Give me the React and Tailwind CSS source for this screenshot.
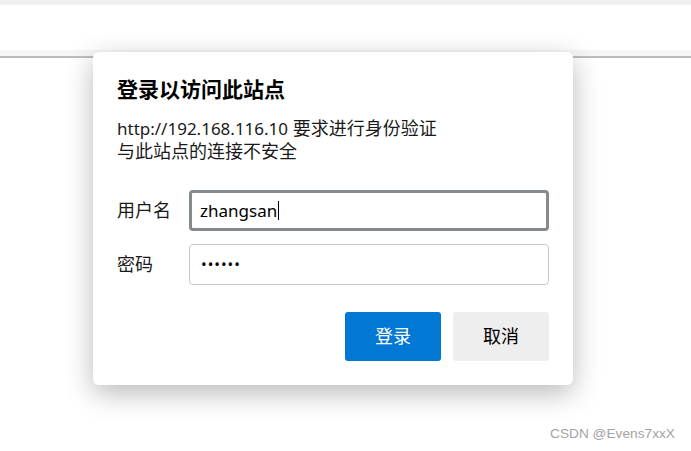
const latin = { fontFamily: '"Noto Sans", sans-serif' };

export default function App() {
  return (
    <div
      className="relative w-[691px] h-[451px] overflow-hidden bg-white"
      style={{ fontFamily: '"Noto Sans", "Noto Sans CJK SC", sans-serif' }}
    >
      {/* browser chrome */}
      <div className="h-[5px] bg-[#f0f0f0]" />
      <div className="h-[45px] bg-white" />
      <div className="h-[6px] bg-[#f7f7f7]" />
      <div className="h-[2px] bg-[#bdbdbd]" />

      {/* dialog */}
      <div className="absolute left-[93px] top-[52px] w-[480px] h-[333px] rounded-[6px] bg-white shadow-[0_8px_28px_rgba(0,0,0,0.28)] px-6 pt-[24px]">
        <h1 className="text-[21px] font-bold text-black leading-[26px]">登录以访问此站点</h1>
        <div className="mt-[15px] text-[18px] leading-[23px] text-[#1a1a1a]">
          <p>
            <span className="text-[17px]" style={latin}>http://192.168.116.10</span> 要求进行身份验证
          </p>
          <p>与此站点的连接不安全</p>
        </div>

        <div className="mt-[27px] flex items-center">
          <label className="w-[72px] text-[18px] text-[#1a1a1a]">用户名</label>
          <div
            className="flex-1 h-[41px] rounded-[4px] border-[3px] border-[#858a8f] flex items-center pl-[8px] text-[17px] text-black"
            style={latin}
          >
            zhangsan<span className="ml-[1px] w-px h-[19px] bg-black" />
          </div>
        </div>

        <div className="mt-[13px] flex items-center">
          <label className="w-[72px] text-[18px] text-[#1a1a1a]">密码</label>
          <div className="flex-1 h-[41px] rounded-[4px] border border-[#c8c8c8] flex items-center pl-[11px] text-[15px] text-black tracking-[1px]">
            ••••••
          </div>
        </div>

        <div className="mt-[27px] flex justify-end gap-3">
          <button className="w-[96px] h-[49px] rounded-[3px] bg-[#0078d4] text-white text-[18px]">登录</button>
          <button className="w-[96px] h-[49px] rounded-[3px] bg-[#eeeeee] text-black text-[18px]">取消</button>
        </div>
      </div>

      <div
        className="absolute left-[550px] top-[424px] text-[13.7px] text-[#a3a3a3]"
        style={{ fontFamily: '"Liberation Sans", Arial, sans-serif' }}
      >
        CSDN @Evens7xxX
      </div>
    </div>
  );
}
